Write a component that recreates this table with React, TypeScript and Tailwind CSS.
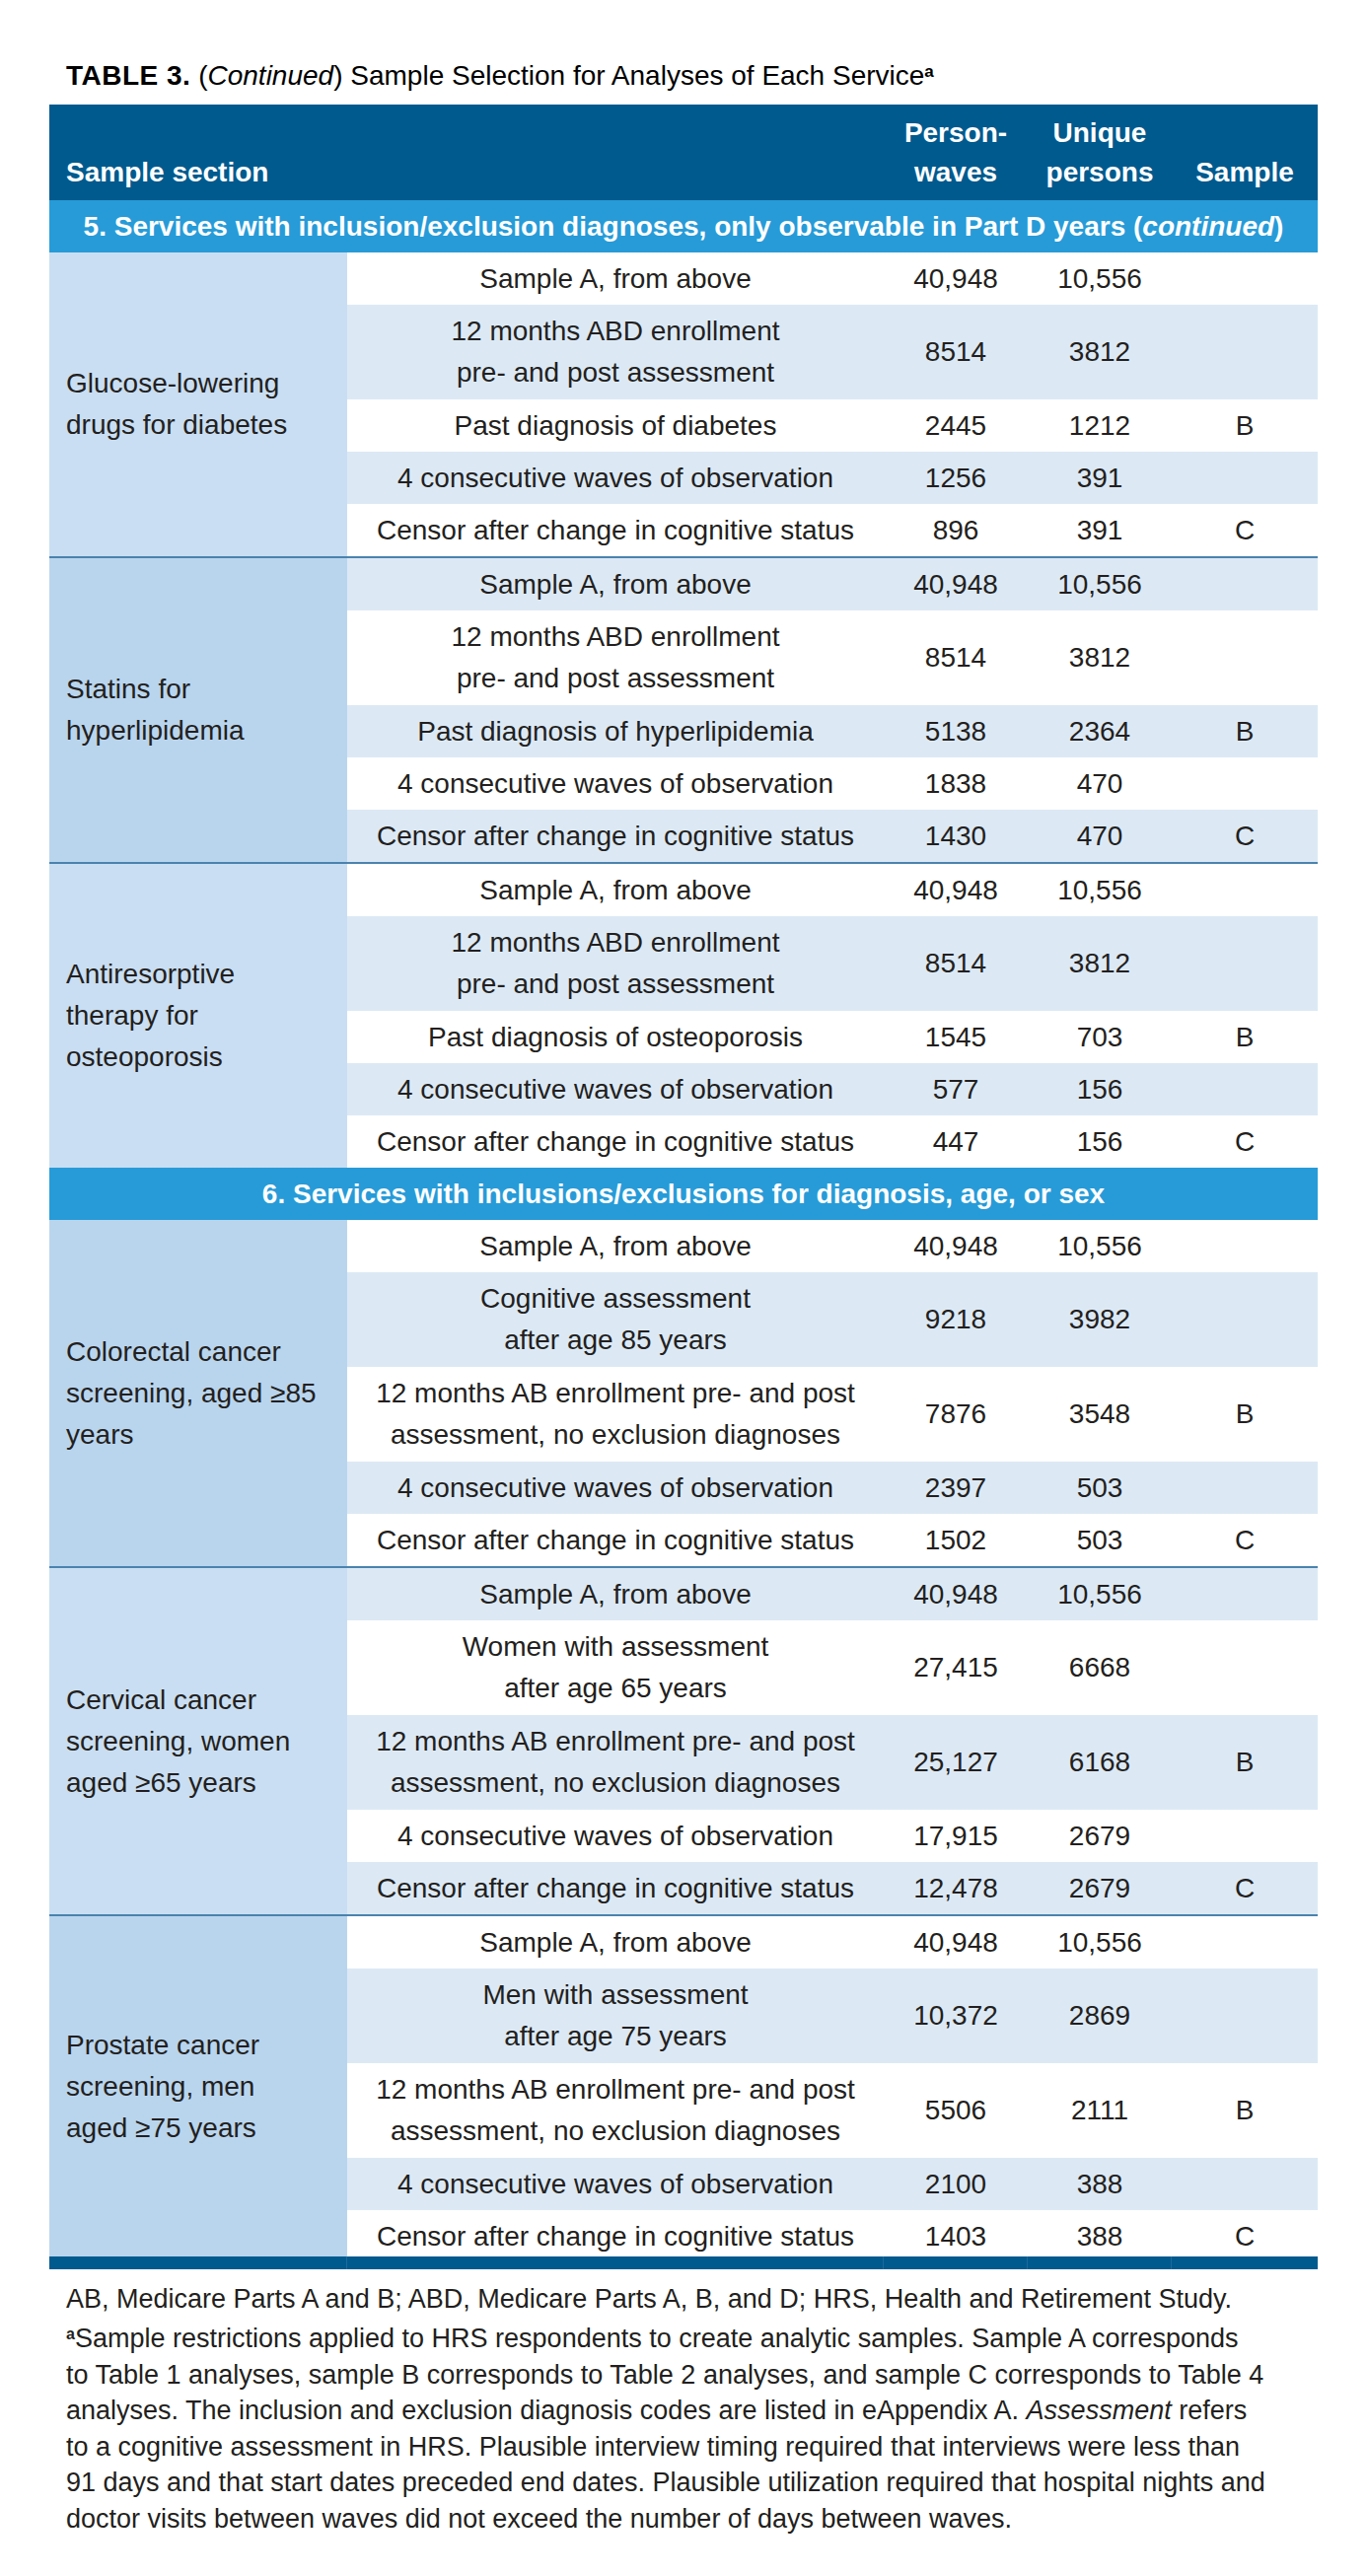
import React from 'react';

type Row = { label: string[]; waves: string; persons: string; sample?: string };
type Group = { name: string[]; rows: Row[] };
type Section = { title: React.ReactNode; groups: Group[] };

const sampleA = (): Row => ({ label: ['Sample A, from above'], waves: '40,948', persons: '10,556' });

const partD = (diag: string, v: string[]): Row[] => [
  sampleA(),
  { label: ['12 months ABD enrollment', 'pre- and post assessment'], waves: '8514', persons: '3812' },
  { label: [`Past diagnosis of ${diag}`], waves: v[0], persons: v[1], sample: 'B' },
  { label: ['4 consecutive waves of observation'], waves: v[2], persons: v[3] },
  { label: ['Censor after change in cognitive status'], waves: v[4], persons: v[3], sample: 'C' },
];

const ageSex = (first: string[], v: string[]): Row[] => [
  sampleA(),
  { label: first, waves: v[0], persons: v[1] },
  {
    label: ['12 months AB enrollment pre- and post', 'assessment, no exclusion diagnoses'],
    waves: v[2],
    persons: v[3],
    sample: 'B',
  },
  { label: ['4 consecutive waves of observation'], waves: v[4], persons: v[5] },
  { label: ['Censor after change in cognitive status'], waves: v[6], persons: v[5], sample: 'C' },
];

const sections: Section[] = [
  {
    title: (
      <>
        5. Services with inclusion/exclusion diagnoses, only observable in Part D years (<i>continued</i>)
      </>
    ),
    groups: [
      { name: ['Glucose-lowering', 'drugs for diabetes'], rows: partD('diabetes', ['2445', '1212', '1256', '391', '896']) },
      { name: ['Statins for', 'hyperlipidemia'], rows: partD('hyperlipidemia', ['5138', '2364', '1838', '470', '1430']) },
      {
        name: ['Antiresorptive', 'therapy for', 'osteoporosis'],
        rows: partD('osteoporosis', ['1545', '703', '577', '156', '447']),
      },
    ],
  },
  {
    title: <>6. Services with inclusions/exclusions for diagnosis, age, or sex</>,
    groups: [
      {
        name: ['Colorectal cancer', 'screening, aged \u226585', 'years'],
        rows: ageSex(['Cognitive assessment', 'after age 85 years'], ['9218', '3982', '7876', '3548', '2397', '503', '1502']),
      },
      {
        name: ['Cervical cancer', 'screening, women', 'aged \u226565 years'],
        rows: ageSex(['Women with assessment', 'after age 65 years'], ['27,415', '6668', '25,127', '6168', '17,915', '2679', '12,478']),
      },
      {
        name: ['Prostate cancer', 'screening, men', 'aged \u226575 years'],
        rows: ageSex(['Men with assessment', 'after age 75 years'], ['10,372', '2869', '5506', '2111', '2100', '388', '1403']),
      },
    ],
  },
];

const Lines = ({ lines }: { lines: string[] }) => (
  <>
    {lines.map((l, i) => (
      <React.Fragment key={i}>
        {i > 0 && <br />}
        {l}
      </React.Fragment>
    ))}
  </>
);

export default function App() {
  let groupIndex = 0;
  return (
    <div className="w-[1386px] bg-white font-['Liberation_Sans',Arial,sans-serif] text-[#231f20]">
      <h1 className="pl-[67px] pt-[63px] text-[28px] leading-[28px] text-black">
        <span className="font-bold tracking-[0.5px]">TABLE 3.</span> (<i>Continued</i>) Sample Selection for Analyses of
        Each Service<sup className="text-[17px] font-bold">a</sup>
      </h1>

      <div className="ml-[50px] mt-[15px] w-[1286px]">
        {/* header */}
        <div className="grid grid-cols-[302px_544px_146px_146px_148px] items-end bg-[#005a8e] pb-[8px] pt-[9px] text-[28px] font-bold leading-[40px] text-white">
          <div className="pl-[17px]">Sample section</div>
          <div />
          <div className="text-center">
            Person-
            <br />
            waves
          </div>
          <div className="text-center">
            Unique
            <br />
            persons
          </div>
          <div className="text-center">Sample</div>
        </div>

        {sections.map((section, si) => {
          let rowIndex = 0;
          return (
            <div key={si}>
              <div className="flex h-[53px] items-center justify-center bg-[#279bd8] text-[28px] font-bold text-white">
                {section.title}
              </div>
              {section.groups.map((group, gi) => {
                const gIdx = groupIndex++;
                const lastGroup = si === sections.length - 1 && gi === section.groups.length - 1;
                return (
                  <div
                    key={gi}
                    className={`flex ${gi > 0 ? 'border-t-2 border-[#4a83ae]' : ''}`}
                  >
                    <div
                      className={`flex w-[302px] shrink-0 items-center pl-[17px] text-[28px] leading-[42px] ${
                        gIdx % 2 === 0 ? 'bg-[#c9def2]' : 'bg-[#b9d5ee]'
                      }`}
                    >
                      <div>
                        <Lines lines={group.name} />
                      </div>
                    </div>
                    <div className="flex flex-1 flex-col">
                      {group.rows.map((row, ri) => {
                        const striped = rowIndex++ % 2 === 1;
                        const lastRow = lastGroup && ri === group.rows.length - 1;
                        const height = row.label.length > 1 ? 'h-[96px]' : lastRow ? 'h-[47px] pt-[6px]' : 'h-[53px]';
                        return (
                          <div
                            key={ri}
                            className={`grid grid-cols-[544px_146px_146px_148px] items-center text-center text-[28px] leading-[42px] ${height} ${
                              striped ? 'bg-[#dce9f5]' : 'bg-white'
                            }`}
                          >
                            <div>
                              <Lines lines={row.label} />
                            </div>
                            <div>{row.waves}</div>
                            <div>{row.persons}</div>
                            <div>{row.sample ?? ''}</div>
                          </div>
                        );
                      })}
                    </div>
                  </div>
                );
              })}
            </div>
          );
        })}

        {/* closing rule */}
        <div className="grid h-[13px] grid-cols-[302px_544px_146px_146px_148px] divide-x divide-[#1c6b9c] bg-[#005a8e]">
          <div />
          <div />
          <div />
          <div />
          <div />
        </div>
      </div>

      <div className="pb-[40px] pl-[67px] pt-[12px] text-[27px] leading-[37px]">
        <p>AB, Medicare Parts A and B; ABD, Medicare Parts A, B, and D; HRS, Health and Retirement Study.</p>
        <p className="mt-[3px] leading-[36.5px]">
          <sup className="text-[16px] font-bold">a</sup>Sample restrictions applied to HRS respondents to create analytic
          samples. Sample A corresponds
          <br />
          to Table 1 analyses, sample B corresponds to Table 2 analyses, and sample C corresponds to Table 4
          <br />
          analyses. The inclusion and exclusion diagnosis codes are listed in eAppendix A. <i>Assessment</i> refers
          <br />
          to a cognitive assessment in HRS. Plausible interview timing required that interviews were less than
          <br />
          91 days and that start dates preceded end dates. Plausible utilization required that hospital nights and
          <br />
          doctor visits between waves did not exceed the number of days between waves.
        </p>
      </div>
    </div>
  );
}
